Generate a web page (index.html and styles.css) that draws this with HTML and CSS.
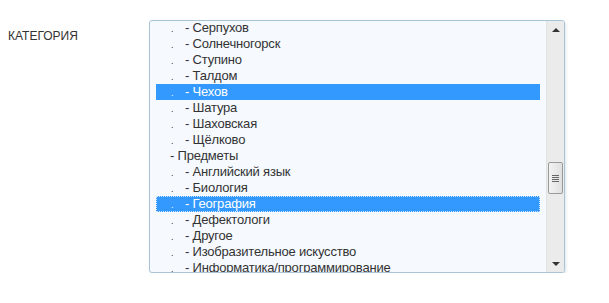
FILE: index.html
```html
<!DOCTYPE html>
<html>
<head>
    <link rel="stylesheet" href="styles.css">
</head>
<body>
    <div class="field">
        <label class="field-label">КАТЕГОРИЯ</label>
        <div class="listbox">
            <div class="options">
                <div class="option sub"><span class="dot">.</span>- Серпухов</div>
                <div class="option sub"><span class="dot">.</span>- Солнечногорск</div>
                <div class="option sub"><span class="dot">.</span>- Ступино</div>
                <div class="option sub"><span class="dot">.</span>- Талдом</div>
                <div class="option sub selected"><span class="dot">.</span>- Чехов</div>
                <div class="option sub"><span class="dot">.</span>- Шатура</div>
                <div class="option sub"><span class="dot">.</span>- Шаховская</div>
                <div class="option sub"><span class="dot">.</span>- Щёлково</div>
                <div class="option top">- Предметы</div>
                <div class="option sub"><span class="dot">.</span>- Английский язык</div>
                <div class="option sub"><span class="dot">.</span>- Биология</div>
                <div class="option sub selected focused"><span class="dot">.</span>- География</div>
                <div class="option sub"><span class="dot">.</span>- Дефектологи</div>
                <div class="option sub"><span class="dot">.</span>- Другое</div>
                <div class="option sub"><span class="dot">.</span>- Изобразительное искусство</div>
                <div class="option sub"><span class="dot">.</span>- Информатика/программирование</div>
            </div>
            <div class="scrollbar">
                <div class="arrow up"></div>
                <div class="track">
                    <div class="thumb">
                        <span class="grip"></span>
                        <span class="grip"></span>
                        <span class="grip"></span>
                        <span class="grip"></span>
                    </div>
                </div>
                <div class="arrow down"></div>
            </div>
        </div>
    </div>
</body>
</html>
```
FILE: styles.css
```css
body {
    margin: 0;
    background: #fff;
    font-family: "Liberation Sans", Arial, sans-serif;
    font-size: 12px;
    color: #333;
}

.field {
    display: flex;
    align-items: flex-start;
    padding-top: 20px;
}

.field-label {
    width: 141px;
    padding-left: 8px;
    padding-top: 9px;
    font-size: 12px;
    color: #333;
}

.listbox {
    display: flex;
    width: 414px;
    height: 251px;
    border: 1px solid #a8c4d6;
    border-radius: 3px;
    background: #f6faff;
    box-shadow: 1px 2px 3px rgba(120, 150, 180, 0.25);
    overflow: hidden;
}

.options {
    flex: 1;
    padding: 0 6px;
    overflow: hidden;
}

.option {
    height: 16px;
    line-height: 16px;
    font-size: 13px;
    letter-spacing: -0.2px;
    color: #333;
    white-space: nowrap;
    box-sizing: border-box;
}

.option:first-child {
    margin-top: -1px;
}

.option .dot {
    display: inline-block;
    width: 14px;
    margin-left: 15px;
    font-size: 9px;
}

.option.top {
    padding-left: 14px;
}

.option.selected {
    background: #3399ff;
    color: #fff;
}

.option.focused {
    outline: 1px dotted #d0e6ff;
    outline-offset: -1px;
}

.scrollbar {
    width: 17px;
    background: #ebebeb;
    border-left: 1px solid #e2e2e2;
    display: flex;
    flex-direction: column;
}

.arrow {
    height: 17px;
    display: flex;
    align-items: center;
    justify-content: center;
}

.arrow::before {
    content: "";
    border-left: 4px solid transparent;
    border-right: 4px solid transparent;
}

.arrow.up::before {
    border-bottom: 4px solid #333;
}

.arrow.down::before {
    border-top: 4px solid #333;
}

.track {
    flex: 1;
    padding-top: 124px;
}

.thumb {
    margin: 0 1px;
    height: 30px;
    border: 1px solid #9a9a9a;
    border-radius: 2px;
    background: linear-gradient(to right, #f3f3f3, #e0e0e0);
    display: flex;
    flex-direction: column;
    align-items: center;
    justify-content: center;
    gap: 1px;
}

.grip {
    width: 7px;
    height: 1px;
    background: #666;
}
```
